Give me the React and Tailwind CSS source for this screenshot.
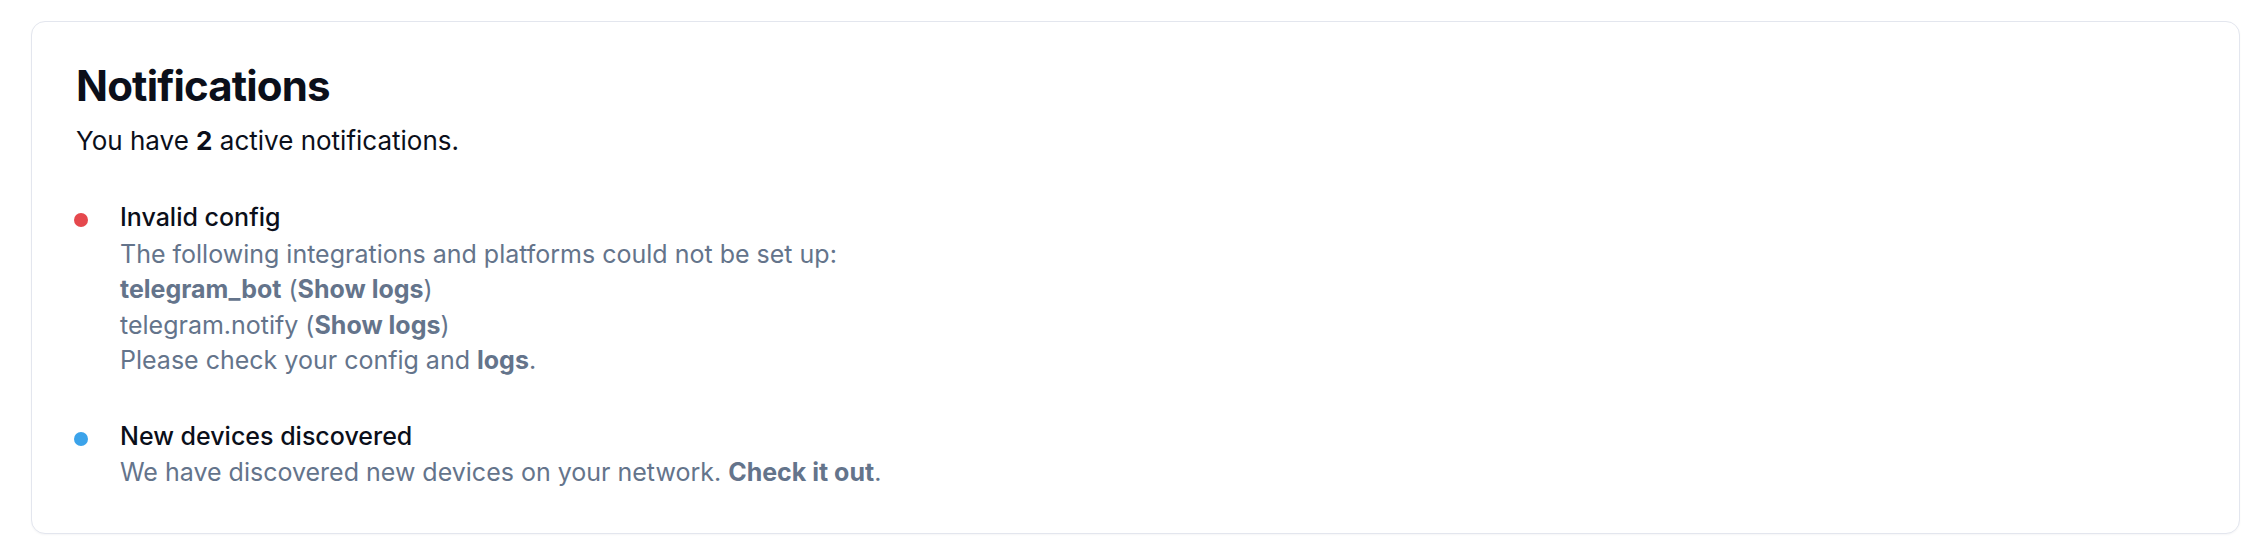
export default function App() {
  return (
    <div className="min-h-[556px] bg-white pl-[31px] pr-[24px] pt-[21px] font-['Inter',sans-serif]">
      <div className="rounded-[14px] border border-[#e3e6ee] bg-white px-[44px] pt-[40px] pb-[43px] shadow-[0_1px_2px_rgba(15,23,42,0.04)]">
        <h1 className="text-[42px] font-bold leading-[48px] tracking-[-0.02em] text-[#0b0f1a]">Notifications</h1>
        <p className="mt-[13px] text-[26px] leading-[36px] text-[#0b0f1a]">
          You have <span className="font-bold">2</span> active notifications.
        </p>
        <ul className="mt-[40px] flex flex-col gap-[40px]">
          <li className="flex items-start">
            <span className="mt-[14px] ml-[-2px] mr-[32px] h-[14px] w-[14px] shrink-0 rounded-full bg-[#e5484d]" />
            <div>
              <div className="text-[25px] font-medium leading-[36px] text-[#0b0f1a]">Invalid config</div>
              <div className="mt-[2px] text-[25px] leading-[35.3px] text-[#64748b]">
                <div>The following integrations and platforms could not be set up:</div>
                <div>
                  <span className="font-bold">telegram_bot</span> (<span className="font-bold">Show logs</span>)
                </div>
                <div>
                  telegram.notify (<span className="font-bold">Show logs</span>)
                </div>
                <div>
                  Please check your config and <span className="font-bold">logs</span>.
                </div>
              </div>
            </div>
          </li>
          <li className="flex items-start">
            <span className="mt-[14px] ml-[-2px] mr-[32px] h-[14px] w-[14px] shrink-0 rounded-full bg-[#3ba3ea]" />
            <div>
              <div className="text-[25px] font-medium leading-[36px] text-[#0b0f1a]">New devices discovered</div>
              <div className="mt-[1px] text-[25px] leading-[35.3px] text-[#64748b]">
                We have discovered new devices on your network. <span className="font-bold">Check it out</span>.
              </div>
            </div>
          </li>
        </ul>
      </div>
    </div>
  );
}
